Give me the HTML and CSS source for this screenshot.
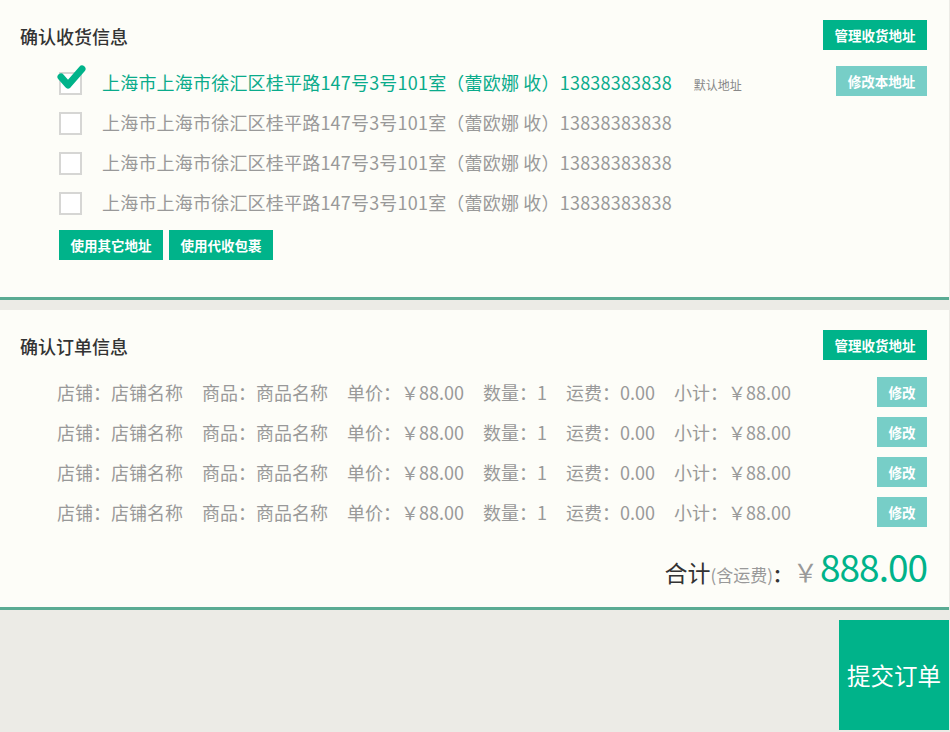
FILE: index.html
```html
<!DOCTYPE html>
<html lang="zh-CN">
<head>
<meta charset="utf-8">
<title>确认订单</title>
<link rel="stylesheet" href="styles.css">
</head>
<body>
<div class="page">
  <section class="panel">
    <div class="panel-head">
      <h2 class="panel-title">确认收货信息</h2>
      <button class="btn btn-green btn-wide">管理收货地址</button>
    </div>
    <ul class="addr-list">
      <li class="addr-row addr-active">
        <span class="checkbox">
          <svg class="check" width="32" height="30" viewBox="0 0 32 30"><polyline points="5,15 12,23 26,7" fill="none" stroke="#00b38a" stroke-width="7" stroke-linecap="round" stroke-linejoin="round"/></svg>
        </span>
        <span class="addr-text">上海市上海市徐汇区桂平路147号3号101室（蕾欧娜 收）13838383838</span>
        <span class="addr-default">默认地址</span>
        <button class="btn btn-light btn-edit-addr">修改本地址</button>
      </li>
      <li class="addr-row">
        <span class="checkbox"></span>
        <span class="addr-text">上海市上海市徐汇区桂平路147号3号101室（蕾欧娜 收）13838383838</span>
      </li>
      <li class="addr-row">
        <span class="checkbox"></span>
        <span class="addr-text">上海市上海市徐汇区桂平路147号3号101室（蕾欧娜 收）13838383838</span>
      </li>
      <li class="addr-row">
        <span class="checkbox"></span>
        <span class="addr-text">上海市上海市徐汇区桂平路147号3号101室（蕾欧娜 收）13838383838</span>
      </li>
    </ul>
    <div class="addr-actions">
      <button class="btn btn-green btn-wide">使用其它地址</button>
      <button class="btn btn-green btn-wide">使用代收包裹</button>
    </div>
  </section>

  <section class="panel panel-order">
    <div class="panel-head">
      <h2 class="panel-title">确认订单信息</h2>
      <button class="btn btn-green btn-wide">管理收货地址</button>
    </div>
    <ul class="order-list">
      <li class="order-row">
        <span>店铺：店铺名称</span><span>商品：商品名称</span><span>单价：￥88.00</span><span>数量：1</span><span>运费：0.00</span><span>小计：￥88.00</span>
        <button class="btn btn-light btn-small">修改</button>
      </li>
      <li class="order-row">
        <span>店铺：店铺名称</span><span>商品：商品名称</span><span>单价：￥88.00</span><span>数量：1</span><span>运费：0.00</span><span>小计：￥88.00</span>
        <button class="btn btn-light btn-small">修改</button>
      </li>
      <li class="order-row">
        <span>店铺：店铺名称</span><span>商品：商品名称</span><span>单价：￥88.00</span><span>数量：1</span><span>运费：0.00</span><span>小计：￥88.00</span>
        <button class="btn btn-light btn-small">修改</button>
      </li>
      <li class="order-row">
        <span>店铺：店铺名称</span><span>商品：商品名称</span><span>单价：￥88.00</span><span>数量：1</span><span>运费：0.00</span><span>小计：￥88.00</span>
        <button class="btn btn-light btn-small">修改</button>
      </li>
    </ul>
    <div class="total">
      <span class="total-label">合计</span><span class="total-note">(含运费)</span><span class="total-colon">：</span>
      <span class="total-yen">￥</span><span class="total-amount">888.00</span>
    </div>
  </section>

  <div class="submit-bar">
    <button class="btn-submit">提交订单</button>
  </div>
</div>
</body>
</html>
```

FILE: styles.css
```css
* { box-sizing: border-box; }
html, body {
  margin: 0;
  padding: 0;
  background: #ecebe6;
  font-family: "Noto Sans CJK SC", "Noto Sans", sans-serif;
}
.page {
  width: 949px;
}
.panel {
  background: #fdfdf8;
  height: 300px;
  border-bottom: 3px solid #5aab93;
}
.panel-order {
  margin-top: 10px;
}
.panel-head {
  display: flex;
  justify-content: space-between;
  align-items: center;
  padding: 20px 22px 0 20px;
}
.panel-title {
  margin: 0;
  padding-top: 2px;
  font-size: 18px;
  font-weight: 500;
  color: #333;
  line-height: 24px;
}
.btn {
  border: 0;
  margin: 0;
  padding: 0;
  height: 30px;
  color: #fff;
  font-family: "Noto Sans CJK SC", "Noto Sans", sans-serif;
  font-size: 13.5px;
  font-weight: 700;
  line-height: 30px;
  text-align: center;
  cursor: pointer;
}
.btn-green { background: #00b38a; }
.btn-light { background: #77cec7; }
.btn-wide { width: 104px; }
.btn-edit-addr { width: 91px; margin-left: auto; margin-top: -2px; }
.btn-small { width: 50px; margin-left: auto; }

.addr-list, .order-list {
  list-style: none;
  margin: 12px 0 0 0;
  padding: 0;
}
.addr-row {
  display: flex;
  align-items: center;
  height: 40px;
  padding: 0 22px 0 59px;
}
.checkbox {
  position: relative;
  width: 23px;
  height: 23px;
  border: 2px solid #d6d6d4;
  background: #fff;
  flex: none;
  margin-top: 2px;
}
.check {
  position: absolute;
  left: -5px;
  top: -12px;
}
.addr-text {
  margin-left: 20px;
  font-size: 18px;
  letter-spacing: 0.2px;
  color: #999;
  white-space: nowrap;
}
.addr-active .addr-text { color: #0aab8b; }
.addr-default {
  margin-left: 22px;
  margin-top: 4px;
  font-size: 12px;
  color: #888;
}
.addr-actions {
  display: flex;
  gap: 6px;
  padding-left: 59px;
  margin-top: 8px;
}

.order-row {
  display: flex;
  align-items: center;
  height: 40px;
  padding: 0 22px 0 57px;
  font-size: 18px;
  color: #999;
  white-space: nowrap;
}
.order-row span { margin-right: 19px; }

.total {
  display: flex;
  justify-content: flex-end;
  align-items: baseline;
  padding: 12px 22px 0 0;
  height: 60px;
}
.total-label { font-size: 23px; color: #333; }
.total-note { font-size: 17px; color: #999; }
.total-colon { font-size: 18px; color: #333; font-weight: 700; margin-right: 2px; }
.total-yen { font-size: 25px; color: #999; margin-right: 2px; }
.total-amount {
  font-size: 37px;
  color: #00b38a;
  letter-spacing: -1px;
  line-height: 44px;
}

.submit-bar {
  display: flex;
  justify-content: flex-end;
  padding-top: 10px;
}
.btn-submit {
  width: 110px;
  height: 110px;
  border: 0;
  margin: 0;
  padding: 0;
  background: #00b38a;
  color: #fff;
  font-family: "Noto Sans CJK SC", "Noto Sans", sans-serif;
  font-size: 23.5px;
  cursor: pointer;
}
```
